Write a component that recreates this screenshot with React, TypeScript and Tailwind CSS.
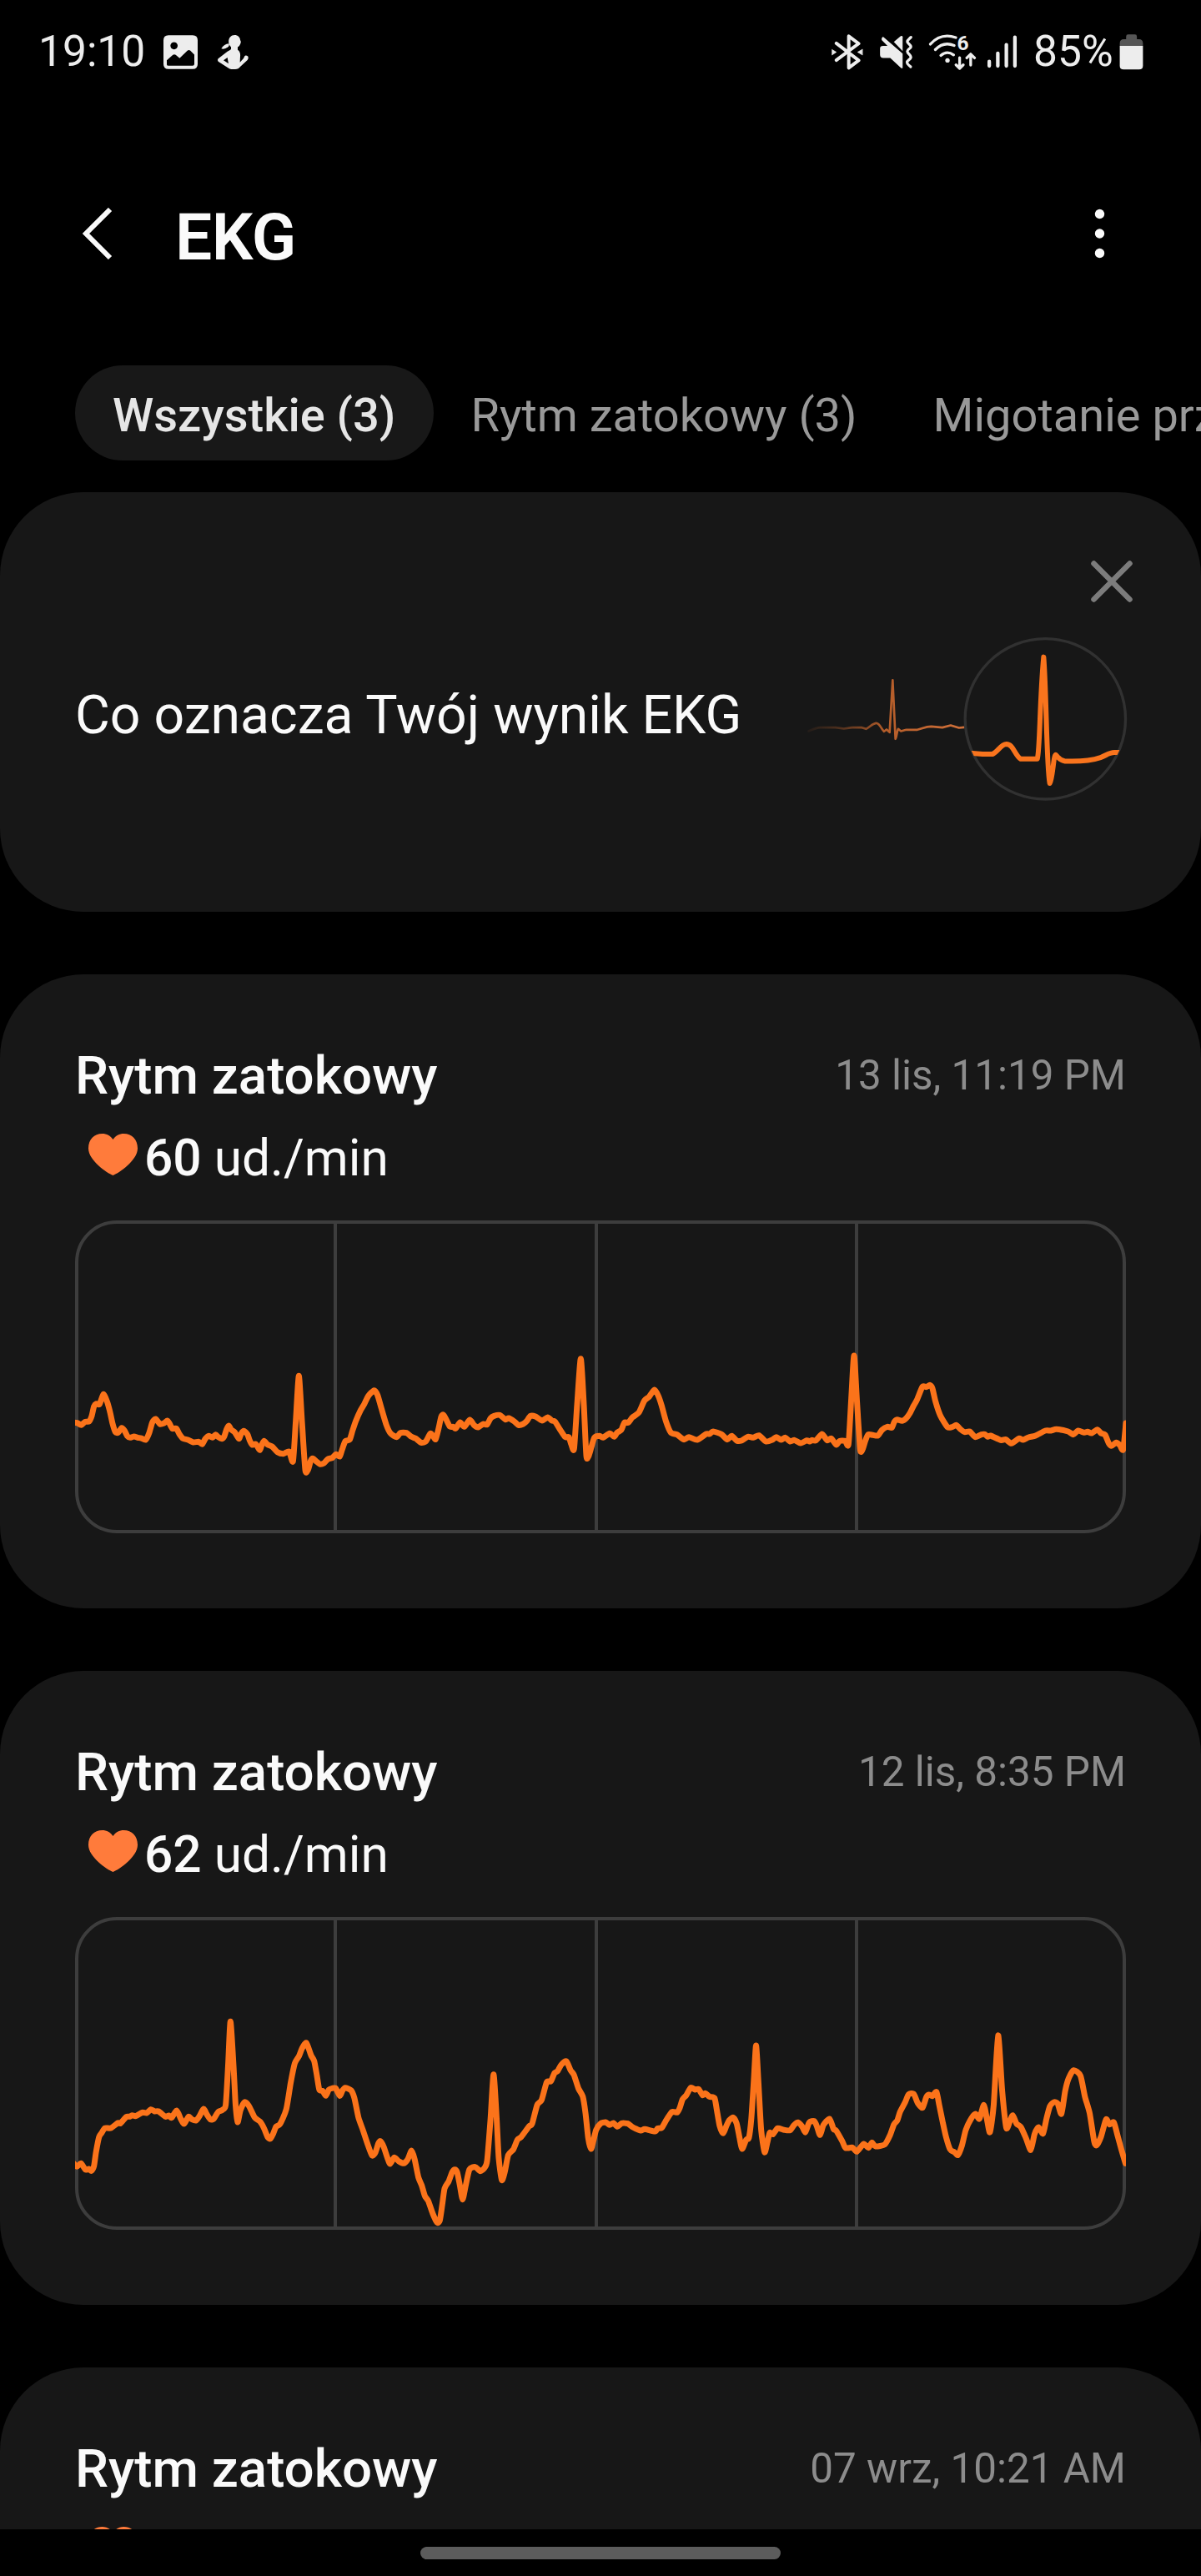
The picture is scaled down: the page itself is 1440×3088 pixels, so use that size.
import React from "react";

type Point = [number, number];

function parse(text: string, dx = 0): Point[] {
  return text
    .trim()
    .split(/\s+/)
    .map((pair) => {
      const [x, y] = pair.split(",").map(Number);
      return [x + dx, y] as Point;
    });
}

// Gentle Catmull-Rom curve through the samples.
function smooth(points: Point[]): string {
  const k = 0.11;
  let d = `M${points[0][0]},${points[0][1]}`;
  for (let i = 0; i < points.length - 1; i++) {
    const a = points[Math.max(0, i - 1)];
    const b = points[i];
    const c = points[i + 1];
    const e = points[Math.min(points.length - 1, i + 2)];
    d += `C${b[0] + (c[0] - a[0]) * k},${b[1] + (c[1] - a[1]) * k} ${c[0] - (e[0] - b[0]) * k},${c[1] - (e[1] - b[1]) * k} ${c[0]},${c[1]}`;
  }
  return d;
}

const firstTrace = [
  ...parse(
    "24,314 30,316 40,318 52,325 66,313 80,312 90,292 98,258 106,248 118,250 132,214 145,240 155,275 165,320 175,350 185,352 198,335 208,345 218,365 228,370 242,366 255,370 268,372 284,378 296,355 308,315 320,303 335,321 350,318 362,309 370,320 380,338 394,337 405,357 418,373 436,378 455,387 475,385 487,394 498,375 510,364 524,370 536,359 545,368 558,374 567,365 575,340 583,327 592,342 604,350 619,374 628,355 637,346 650,358 658,380 667,396 680,393 694,415 702,395 710,382 722,395 740,403 758,422 780,428 800,420 814,455 824,310 835,148 846,310 858,486 868,486 877,455 885,445 897,455 910,465 925,462 940,447 955,443 968,430 982,438 990,415 1002,383 1018,377 1028,345 1040,310 1057,272 1070,250 1085,220 1106,200 1118,217 1132,265 1150,325 1165,355 1187,368 1200,353 1222,353 1240,367 1255,373 1275,388 1292,383 1308,355 1318,365 1327,376 1337,340 1347,295 1355,288"
  ),
  ...parse(
    "45,305 58,330 70,331 79,337 95,315 110,331 130,306 145,325 160,333 178,321 192,323 205,300 217,292 238,289 258,305 270,300 290,312 305,325 322,321 335,310 348,292 366,294 390,309 410,297 425,309 436,312 455,342 473,368 486,368 495,395 505,410 516,250 529,86 540,250 549,435 557,437 567,405 578,370 597,364 609,370 633,355 649,367 660,352 675,342 686,316 700,316 715,297 738,280 758,237 775,223 794,198 808,220 820,255 835,310 853,352 875,359 900,377 918,368 948,378 980,357 992,357 1005,348 1035,358 1056,377 1072,364 1090,381 1107,381 1130,367 1150,370 1170,362 1195,384 1218,378 1232,368 1250,378 1265,370 1282,384 1298,379",
    1320
  ),
  ...parse(
    "60,390 82,380 92,384 100,379 115,380 137,357 155,380 170,373 188,396 200,382 220,382 232,394 242,230 252,75 262,230 274,412 283,412 293,380 303,359 320,361 338,363 352,343 372,331 388,334 397,313 407,305 425,310 440,300 453,282 465,258 478,235 498,187 512,188 525,181 534,193 545,240 562,290 588,332 605,332 620,325 635,340 650,350 668,348 688,368 710,359 722,358 733,367 743,363 780,379 798,377 818,391 845,373 860,378 880,369 905,363 940,345 960,345 980,340 1022,348 1040,359 1058,345 1080,352 1092,349 1107,354 1127,341 1140,354 1155,360 1168,390 1178,400 1195,388 1208,397 1220,413 1230,318",
    2580
  ),
];

const secondTrace = [
  ...parse(
    "20,640 30,652 42,640 55,663 65,660 72,667 80,650 86,600 95,545 103,530 112,513 130,513 150,495 158,496 175,473 185,472 192,467 203,470 222,457 235,459 247,446 258,453 270,453 290,472 300,468 308,476 323,450 335,480 345,498 358,472 368,482 380,486 390,470 402,444 412,465 422,482 432,480 445,455 457,448 467,430 474,290 481,130 490,290 496,430 502,492 510,450 522,420 535,433 552,475 568,490 580,515 590,545 598,552 606,535 615,508 627,498 645,445 658,350 670,280 682,255 692,225 704,207 718,252 727,272 735,325 742,375 752,380 761,397 770,375 780,370 790,370 802,397 810,378 818,368 835,377 845,405 857,475 870,520 885,575 897,612 907,600 915,570 921,560 931,580 942,620 950,642 962,619 975,632 990,640 1002,625 1013,594 1022,625 1033,690 1043,720 1052,757 1062,775 1075,820 1088,853 1096,845 1103,790 1110,730 1122,705 1132,672 1140,662 1147,672 1155,720 1163,770 1172,720 1183,662 1200,653 1215,668 1228,655 1235,630 1245,480 1254,320 1263,480 1269,620 1278,700 1287,670 1297,610 1312,590 1324,555 1335,545 1358,507 1367,498 1382,430 1395,412 1410,348 1422,345 1433,315 1442,308 1453,285 1468,273 1480,305 1490,322 1503,370 1516,400 1524,460 1532,550 1540,588 1547,560 1555,520 1568,497"
  ),
  ...parse(
    "15,492 27,502 38,495 50,508 62,496 80,497 95,510 118,522 130,517 160,525 168,514 180,512 193,485 210,455 225,457 233,440 241,410 252,395 265,368 278,375 288,373 300,395 308,388 320,400 335,405 342,450 350,505 360,532 370,505 378,485 390,475 400,497 408,545 416,588 428,555 436,548 443,480 450,350 457,216 464,350 472,520 482,600 490,565 497,530 507,535 520,514 540,520 557,521 568,503 580,493 592,507 602,528 613,493 628,488 636,508 645,538 655,502 673,480 685,518 692,522 710,560 720,585 740,583 753,598 773,570 787,584 797,565 808,579 835,572 850,540 862,500 872,485 880,455 895,420 905,392 920,390 932,423 946,440 957,402 965,393 975,398 987,383 995,430 1005,490 1015,545 1027,590 1040,600 1050,610 1062,575 1073,520 1090,477 1102,462 1113,480 1126,430 1135,480 1144,528 1155,430 1168,180 1180,380 1192,512 1202,490 1211,467 1222,497 1235,510 1250,550 1264,592 1275,535 1287,510 1300,533 1310,480 1320,435 1332,420 1343,425 1354,462 1365,380 1375,335 1390,305 1410,325 1423,400 1437,460 1450,560 1457,575 1470,545 1485,482 1495,500 1508,493 1520,545 1530,590 1542,640",
    1568
  ),
];

interface Reading {
  date: string;
  bpm: number;
  viewBox: string;
  trace: Point[];
}

const readings: Reading[] = [
  { date: "13 lis, 11:19 PM", bpm: 60, viewBox: "30 -411 3780 1125", trace: firstTrace },
  { date: "12 lis, 8:35 PM", bpm: 62, viewBox: "24.5 -246 3087 1125", trace: secondTrace },
  { date: "07 wrz, 10:21 AM", bpm: 60, viewBox: "30 -411 3780 1125", trace: firstTrace },
];

function StatusBar() {
  return (
    <div className="flex h-[124px] shrink-0 items-center justify-between pl-[46px] pr-[69px] text-[51.5px] leading-[62px] text-[#ededed]">
      <div className="flex items-center">
        <span className="w-[150px]">19:10</span>
        <svg className="h-[41px] w-[41px]" viewBox="588 126 123 122" fill="#ededed">
          <path
            fillRule="evenodd"
            d="M606,126H693Q711,126 711,144V230Q711,248 693,248H606Q588,248 588,230V144Q588,126 606,126ZM626,151a13,13 0 1 0 0.1,0ZM600,216V232Q600,236 606,236H693Q699,236 699,230V196L684,181Q679,177 674,182L646,209L632,197Q627,193 622,197Z"
          />
        </svg>
        <svg className="ml-6 h-[41px] w-[37px]" viewBox="783 125 111 123" fill="#ededed">
          <path d="M844,125C855,125 864,133 864,143C868,149 866,154 864,158C862,164 858,167 855,168V178C864,184 865,194 864,201L863,223L876,209L880,201Q882,197 888,199Q894,200 893,209L890,215L864,239Q858,248 846,248H832Q826,248 820,243L785,220Q781,215 785,210L818,184Q828,180 831,176V168C826,164 824,158 823,155C820,137 830,125 844,125Z" />
          <path d="M818,206L804,216L822,228Z" fill="#000" />
          <path d="M796,174Q808,178 820,168Q827,161 823,156Q806,157 796,174Z" />
        </svg>
      </div>
      <div className="flex items-center">
        <svg className="h-[43px] w-[38px]" viewBox="110 120 114 130" fill="none" stroke="#ededed" strokeWidth="12" strokeLinecap="round" strokeLinejoin="round">
          <path d="M127,153L208,215L172,242V127L208,154L127,214" />
          <path d="M112,176L127,185L112,195ZM221,175L204,185L221,195Z" fill="#ededed" strokeWidth="2" />
        </svg>
        <svg className="ml-[19px] h-[43px] w-[41px]" viewBox="282 120 123 130" fill="#ededed">
          <path d="M291,134L296,129L367,190V243H362L322,206H297Q285,206 285,194V172Q285,162 296,162H312L291,141Z" />
          <path d="M335,148L360,127Q366,124 367,130V181Z" />
          <path
            d="M397,131C393,136 384,141 384,147C384,153 397,158 397,165C397,172 384,174 384,182C384,190 397,196 397,203C397,211 383,214 383,222C383,230 390,232 396,238"
            fill="none"
            stroke="#ededed"
            strokeWidth="10"
            strokeLinecap="round"
          />
        </svg>
        <svg className="ml-[18px] h-[43px] w-[58px]" viewBox="459 120 174 130" fill="none" stroke="#ededed" strokeWidth="10" strokeLinecap="round" strokeLinejoin="round">
          <path d="M466,156Q504,114 558,132M484,176Q514,145 552,161M504,197Q526,178 550,195" />
          <circle cx="528" cy="215" r="8" fill="#ededed" stroke="none" />
          <path d="M572,205V242M559,231L572,244L585,231M612,232V194M598,206L612,192L626,206" />
          <text x="563" y="178" fontSize="74" fontWeight="700" fill="#ededed" stroke="none" fontFamily="Roboto">
            6
          </text>
        </svg>
        <svg className="ml-3 h-[43px] w-[38px]" viewBox="669 120 114 130" stroke="#ededed" strokeWidth="13" strokeLinecap="round">
          <path d="M678,219V235M709,189V235M740,158V235M771,131V235" />
        </svg>
        <span className="ml-[18px] w-[103px] whitespace-nowrap">85%</span>
        <svg className="h-[43px] w-[29px]" viewBox="1148 120 86 130">
          <path d="M1172,138V128Q1172,121 1179,121H1204Q1211,121 1211,128V138H1218Q1233,138 1233,153V163H1149V153Q1149,138 1164,138Z" fill="#555" />
          <path d="M1149,162H1233V234Q1233,248 1219,248H1163Q1149,248 1149,234Z" fill="#ededed" />
        </svg>
      </div>
    </div>
  );
}

function Header() {
  return (
    <header className="flex h-[312px] shrink-0 items-center pl-[98px] pr-[115px]">
      <svg className="h-[62px] w-[38px]" viewBox="0 0 38 62" fill="none" stroke="#fafafa" strokeWidth="6">
        <path d="M34,2L5,31L34,60" />
      </svg>
      <h1 className="ml-[74px] flex-1 pt-2 text-[78.5px] font-semibold leading-[94px] tracking-[-0.5px] text-[#fafafa]">EKG</h1>
      <svg className="h-[60px] w-[13px]" viewBox="0 0 13 60" fill="#fafafa">
        <circle cx="6.5" cy="6.5" r="5.7" />
        <circle cx="6.5" cy="30" r="5.7" />
        <circle cx="6.5" cy="53.5" r="5.7" />
      </svg>
    </header>
  );
}

function Tabs() {
  return (
    <nav className="mt-[2px] flex h-[114px] shrink-0 overflow-hidden whitespace-nowrap pl-[90px] text-[56px] leading-[114px] text-[#999]">
      <div className="h-[114px] shrink-0 rounded-full bg-[#181818] pl-[45px] pr-[46px] pt-[3px] font-medium text-[#e6e6e6]">Wszystkie (3)</div>
      <div className="shrink-0 pl-[44px] pr-[46px] pt-[3px]">Rytm zatokowy (3)</div>
      <div className="shrink-0 px-[45px] pt-[3px]">Migotanie przedsionków (0)</div>
    </nav>
  );
}

function Banner() {
  return (
    <section className="flex h-[503px] shrink-0 flex-col rounded-[100px] bg-[#171717]">
      <div className="flex h-[170px] shrink-0 justify-end pr-[82px] pt-[82px]">
        <svg className="h-[50px] w-[50px]" viewBox="0 0 50 50" stroke="#7c7c7c" strokeWidth="6.5" strokeLinecap="round">
          <path d="M3.5,3.5L46.5,46.5M46.5,3.5L3.5,46.5" />
        </svg>
      </div>
      <div className="flex h-[203px] items-center justify-between pl-[90px] pr-[87px]">
        <p className="pb-[10px] text-[64.3px] leading-[76px] text-[#fafafa]">Co oznacza Twój wynik EKG</p>
        <svg className="h-[203px] w-[393px]" viewBox="60 360 1180 610" fill="none" strokeLinecap="round" strokeLinejoin="round">
          <defs>
            <linearGradient id="fade" gradientUnits="userSpaceOnUse" x1="80" y1="0" x2="650" y2="0">
              <stop offset="0" stopColor="#e87430" stopOpacity="0.05" />
              <stop offset="0.2" stopColor="#e87430" stopOpacity="0.25" />
              <stop offset="0.5" stopColor="#e87430" stopOpacity="0.75" />
              <stop offset="1" stopColor="#f08040" stopOpacity="0.85" />
            </linearGradient>
            <clipPath id="lens">
              <circle cx="941" cy="666" r="290" />
            </clipPath>
          </defs>
          <path
            d="M88,710C105,703 115,698 130,697H185L215,701L245,697H280L295,702C310,694 318,683 331,681C345,680 350,704 360,711L369,704L380,714L391,526L401,738C405,735 407,705 411,702L421,710L440,705H480C500,700 510,693 530,693L570,697L600,689L630,698L648,696"
            stroke="url(#fade)"
            strokeWidth="8"
          />
          <circle cx="941" cy="666" r="289" stroke="#313131" strokeWidth="10" />
          <path
            d="M660,788L715,793H750C770,785 780,758 801,757C826,757 830,795 852,810H912C922,780 920,600 935,443C945,560 945,840 957,898C968,880 970,800 978,795C985,800 990,815 1012,818C1060,820 1110,815 1140,805C1160,798 1170,787 1190,787H1225"
            stroke="#f9741d"
            strokeWidth="18"
            clipPath="url(#lens)"
          />
        </svg>
      </div>
    </section>
  );
}

function Chart({ viewBox, trace }: { viewBox: string; trace: Point[] }) {
  return (
    <div className="relative mt-[38px] h-[375px] shrink-0 overflow-hidden">
      <div className="flex h-full rounded-[50px] border-4 border-[#3d3d3d]">
        <div className="w-[310px] shrink-0 border-r-4 border-[#3d3d3d]" />
        <div className="w-[313px] shrink-0 border-r-4 border-[#3d3d3d]" />
        <div className="w-[312px] shrink-0 border-r-4 border-[#3d3d3d]" />
      </div>
      <svg className="absolute inset-0 h-full w-full" viewBox={viewBox} preserveAspectRatio="none" fill="none">
        <path d={smooth(trace)} stroke="#fb731a" strokeWidth="7" strokeLinecap="round" strokeLinejoin="round" vectorEffect="non-scaling-stroke" />
      </svg>
    </div>
  );
}

function ReadingCard({ date, bpm, viewBox, trace }: Reading) {
  return (
    <article className="mt-[75px] flex h-[760px] shrink-0 flex-col rounded-[100px] bg-[#171717] px-[90px] pt-[84px]">
      <div className="flex h-[76px] items-center justify-between">
        <h2 className="text-[63.7px] font-medium leading-[76px] text-[#fafafa]">Rytm zatokowy</h2>
        <span className="pb-[2px] text-[49.4px] leading-[76px] text-[#8c8c8c]">{date}</span>
      </div>
      <div className="mt-[21px] flex h-[76px] items-center pl-4 text-[60.4px] leading-[76px] text-[#fafafa]">
        <svg className="mb-[6px] h-[50px] w-[59px]" viewBox="0 0 59 50" fill="#ff7b3b">
          <path d="M29.5,50C22,47 0,32 0,17.5C0,7 7,0 16.5,0C22,0 26.5,2.5 29.5,7C32.5,2.5 37,0 42.5,0C52,0 59,7 59,17.5C59,32 37,47 29.5,50Z" />
        </svg>
        <p className="ml-2 pt-[4px]">
          <span className="font-medium">{bpm}</span> ud./min
        </p>
      </div>
      <Chart viewBox={viewBox} trace={trace} />
    </article>
  );
}

export default function App() {
  return (
    <div className="flex h-[3088px] w-[1440px] flex-col overflow-hidden bg-black font-['Roboto',sans-serif]">
      <StatusBar />
      <Header />
      <Tabs />
      <main className="mt-[38px] flex h-[2442px] shrink-0 flex-col overflow-hidden">
        <Banner />
        {readings.map((reading) => (
          <ReadingCard key={reading.date} {...reading} />
        ))}
      </main>
      <footer className="flex flex-1 justify-center bg-black pt-[21px]">
        <div className="h-[15px] w-[432px] rounded-full bg-[#5c5c5c]" />
      </footer>
    </div>
  );
}
